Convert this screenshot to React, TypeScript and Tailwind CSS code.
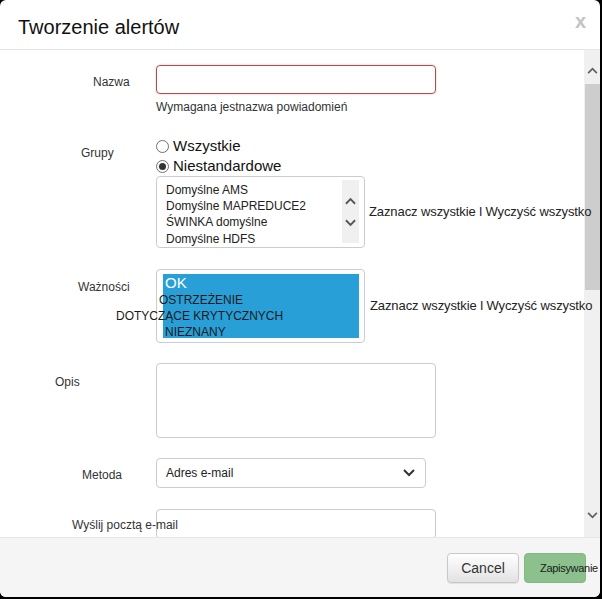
import React from "react";

const Chevron = ({ up, className }: { up?: boolean; className?: string }) => (
  <svg viewBox="0 0 12 8" className={className} fill="none" stroke="currentColor" strokeWidth="2">
    {up ? <polyline points="1,7 6,2 11,7" /> : <polyline points="1,1 6,6 11,1" />}
  </svg>
);

const Label = ({ text, left, top }: { text: string; left: string; top: string }) => (
  <div className={`w-[156px] shrink-0 whitespace-nowrap text-[12px] leading-[14px] text-[#333] relative z-10 ${left} ${top}`}>
    {text}
  </div>
);

const grupy = ["Domyślne AMS", "Domyślne MAPREDUCE2", "ŚWINKA domyślne", "Domyślne HDFS"];

const App: React.FC = () => {
  return (
    <div className="w-[602px] h-[599px] bg-black font-['Liberation_Sans',Arial,sans-serif]">
      <div className="w-[600px] h-[597px] bg-white rounded-[6px] overflow-hidden flex flex-col">
        {/* naglowek */}
        <div className="h-[50px] shrink-0 flex items-start border-b border-[#e5e5e5] pl-[18px] pr-[14px]">
          <h1 className="pt-[16px] text-[20px] leading-[22px] text-[#111]">Tworzenie alertów</h1>
          <span className="ml-auto pt-[10px] text-[20px] leading-[22px] font-bold text-[#c4c4c4]">x</span>
        </div>

        {/* tresc */}
        <div className="h-[487px] shrink-0 flex overflow-hidden">
          <div className="w-[584px] shrink-0">
            {/* Nazwa */}
            <div className="flex mt-[15px]">
              <Label text="Nazwa" left="pl-[93px]" top="pt-[10px]" />
              <div>
                <div className="w-[280px] h-[29px] rounded-[4px] border border-[#b94a48] shadow-[0_0_2px_rgba(185,74,72,0.4)]" />
                <p className="mt-[6px] text-[12px] leading-[14px] text-[#333]">Wymagana jestnazwa powiadomień</p>
              </div>
            </div>

            {/* Grupy */}
            <div className="flex mt-[23px]">
              <Label text="Grupy" left="pl-[81px]" top="pt-[9px]" />
              <div>
                <div className="h-[19px] flex items-center gap-[4px] text-[15px] text-[#111]">
                  <span className="w-[13px] h-[13px] rounded-full border border-[#707070] bg-white" />
                  Wszystkie
                </div>
                <div className="h-[20px] flex items-center gap-[4px] text-[15px] text-[#111]">
                  <span className="w-[13px] h-[13px] rounded-full border border-[#707070] bg-white flex items-center justify-center">
                    <span className="w-[7px] h-[7px] rounded-full bg-[#333]" />
                  </span>
                  Niestandardowe
                </div>
                <div className="flex items-center">
                  <div className="w-[209px] h-[72px] rounded-[4px] border border-[#ccc] flex overflow-hidden">
                    <div className="flex-1 pl-[9px] pt-[5px] text-[12px] text-[#222]">
                      {grupy.map((g, i) => (
                        <div key={g} className={`h-[16px] leading-[16px] whitespace-nowrap ${i === 3 ? "mt-[1px]" : ""}`}>
                          {g}
                        </div>
                      ))}
                    </div>
                    <div className="w-[17px] mt-[3px] mb-[4px] mr-[5px] bg-[#f0f0f0] flex flex-col items-center text-[#555]">
                      <Chevron up className="w-[11px] h-[8px] mt-[17px]" />
                      <Chevron className="w-[11px] h-[8px] mt-[14px]" />
                    </div>
                  </div>
                  <span className="relative z-10 ml-[4px] whitespace-nowrap text-[13px] tracking-[-0.1px] text-[#222]">
                    Zaznacz wszystkie l Wyczyść wszystko
                  </span>
                </div>
              </div>
            </div>

            {/* Waznosci */}
            <div className="flex mt-[21px]">
              <Label text="Ważności" left="pl-[78px]" top="pt-[11px]" />
              <div className="flex items-center">
                <div className="w-[209px] h-[74px] rounded-[4px] border border-[#ccc] pt-[4px] pl-[6px] pr-[5px]">
                  <div className="h-[64px] bg-[#299fd8] text-[12px] text-[#1a1a1a]">
                    <div className="h-[18px] leading-[18px] pl-[2px] text-[15px] text-white">OK</div>
                    <div className="h-[16px] leading-[16px] whitespace-nowrap -ml-[4px]">OSTRZEŻENIE</div>
                    <div className="h-[16px] leading-[16px] whitespace-nowrap -ml-[47px]">DOTYCZĄCE KRYTYCZNYCH</div>
                    <div className="h-[16px] leading-[16px] whitespace-nowrap ml-[2px] overflow-hidden">NIEZNANY</div>
                  </div>
                </div>
                <span className="relative z-10 ml-[5px] whitespace-nowrap text-[13px] tracking-[-0.1px] text-[#222]">
                  Zaznacz wszystkie l Wyczyść wszystko
                </span>
              </div>
            </div>

            {/* Opis */}
            <div className="flex mt-[20px]">
              <Label text="Opis" left="pl-[55px]" top="pt-[12px]" />
              <div className="w-[280px] h-[75px] rounded-[4px] border border-[#ccc]" />
            </div>

            {/* Metoda */}
            <div className="flex mt-[20px]">
              <Label text="Metoda" left="pl-[82px]" top="pt-[10px]" />
              <div className="w-[270px] h-[30px] rounded-[4px] border border-[#ccc] flex items-center pl-[9px] pr-[10px] text-[12px] text-[#222]">
                Adres e-mail
                <Chevron className="ml-auto w-[12px] h-[8px] text-[#333]" />
              </div>
            </div>

            {/* Wyslij */}
            <div className="flex mt-[21px]">
              <Label text="Wyślij pocztą e-mail" left="pl-[72px]" top="pt-[9px]" />
              <div className="w-[280px] h-[30px] rounded-[4px] border border-[#ccc] bg-white" />
            </div>
          </div>

          {/* pasek przewijania */}
          <div className="w-[16px] shrink-0 bg-[#f0f0f0] flex flex-col text-[#606060]">
            <div className="h-[34px] flex items-center justify-center pt-[7px]">
              <Chevron up className="w-[11px] h-[7px]" />
            </div>
            <div className="h-[206px] ml-[1px] bg-[#cdcdcd]" />
            <div className="flex-1" />
            <div className="h-[44px] flex items-center justify-center">
              <Chevron className="w-[11px] h-[7px]" />
            </div>
          </div>
        </div>

        {/* stopka */}
        <div className="flex-1 border-t border-[#e5e5e5] bg-[#f5f5f5] flex justify-end items-start gap-[5px] pt-[15px] pr-[14px]">
          <button className="w-[72px] h-[30px] rounded-[4px] border border-[#c8c8c8] bg-gradient-to-b from-white to-[#e2e2e2] text-[14px] text-[#333] shadow-[0_1px_1px_rgba(0,0,0,0.08)]">
            Cancel
          </button>
          <button className="w-[62px] h-[30px] rounded-[4px] border border-[#82b882] bg-[#8cc08c] text-[11px] tracking-[-0.3px] text-[#1a1a1a] text-left pl-[15px] whitespace-nowrap">
            Zapisywanie
          </button>
        </div>
      </div>
    </div>
  );
};

export default App;
